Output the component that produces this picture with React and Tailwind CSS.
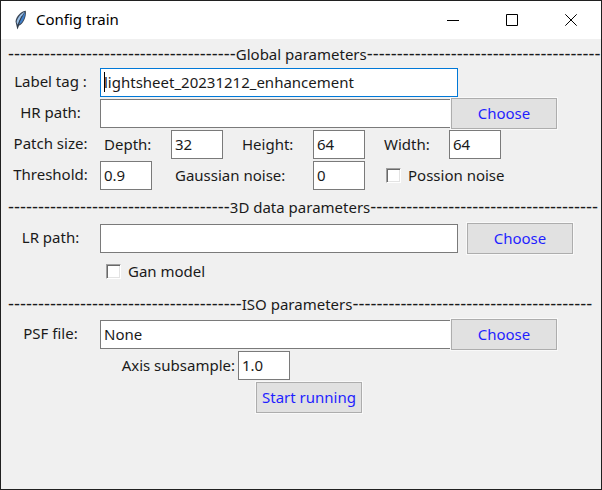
import React from 'react';

function Divider({ title, left, right }) {
  return (
    <h2 className="flex h-8 items-center overflow-hidden whitespace-nowrap pl-[7px]">
      <span className="font-['Liberation_Sans',sans-serif] text-lg leading-none">{'-'.repeat(left)}</span>
      <span className="pb-px">{title}</span>
      <span className="font-['Liberation_Sans',sans-serif] text-lg leading-none">{'-'.repeat(right)}</span>
    </h2>
  );
}

function Row({ children }) {
  return <div className="flex h-[31px] items-center whitespace-nowrap">{children}</div>;
}

function RowLabel({ htmlFor, children }) {
  return (
    <label htmlFor={htmlFor} className="w-[99px] shrink-0 self-start pt-px text-center">
      {children}
    </label>
  );
}

const field = 'h-[29px] border border-[#7a7a7a] bg-white px-[3px] pb-0.5 text-[15px] text-[#1a1a1a] outline-none';

function WideField({ id, value }) {
  return <input id={id} type="text" defaultValue={value} className={`${field} w-full min-w-0 max-w-[358px]`} />;
}

function SmallField({ id, value }) {
  return <input id={id} type="text" defaultValue={value} className={`${field} w-[52px] shrink-0`} />;
}

function ActionButton({ children }) {
  return (
    <button
      type="button"
      className="h-[31px] w-[106px] shrink-0 border border-[#adadad] bg-[#e1e1e1] pb-0.5 text-center text-[#1f1fff] shadow-[0_0_0_1px_#f9f9f9]"
    >
      {children}
    </button>
  );
}

function Tick({ id, children }) {
  return (
    <label htmlFor={id} className="flex items-center gap-[7px]">
      <input
        id={id}
        type="checkbox"
        className="size-[15px] appearance-none border border-t-[#a0a0a0] border-r-white border-b-white border-l-[#a0a0a0] bg-white shadow-[inset_1px_1px_0_#696969,inset_-1px_-1px_0_#e3e3e3]"
      />
      <span className="pb-px">{children}</span>
    </label>
  );
}

function Feather() {
  return (
    <svg viewBox="0 0 14 20" className="h-5 w-3.5" aria-hidden="true">
      <path d="M11.8 .8C7.5 1.2 2.2 6 1.5 11.5L2.4 15.5 3.4 19.4 4.8 15.8C9 14.4 12.8 6.7 11.8.8Z" fill="#3a4656" />
      <path d="M10.8 1.8C7 3.2 3.2 8 2.6 12.2L3.8 14.8C5.2 10.5 7.5 6 10.8 1.8Z" fill="#9cc0e6" />
      <path d="M11 2.2C8.6 6.2 6.2 10.3 4.8 14.6 8.6 12.8 11.4 7 11 2.2Z" fill="#3f7fca" />
      <path d="M8 6C6 9.5 4.4 13 3.5 18.5" stroke="#26303c" strokeWidth=".7" fill="none" />
    </svg>
  );
}

function WindowButton({ label, children }) {
  return (
    <button type="button" aria-label={label} className="flex h-full w-[59px] items-center justify-center">
      <svg viewBox="0 0 12 12" className="size-3" fill="none" stroke="#000" aria-hidden="true">
        {children}
      </svg>
    </button>
  );
}

export default function App() {
  return (
    <div className="flex min-h-screen flex-col border border-[#202020] bg-[#f0f0f0] font-['Noto_Sans','Open_Sans',sans-serif] text-[15px] leading-[26px] text-[#1a1a1a]">
      <header className="flex h-[38px] items-center bg-white pr-px pl-[13px] text-black">
        <Feather />
        <h1 className="ml-2 flex-1 pb-0.5">Config train</h1>
        <div className="flex h-full">
          <WindowButton label="Minimize"><path d="M0 6.5H12" /></WindowButton>
          <WindowButton label="Maximize"><path d="M.5.5H11.5V11.5H.5Z" /></WindowButton>
          <WindowButton label="Close"><path d="M.3.3 11.7 11.7M11.7.3.3 11.7" /></WindowButton>
        </div>
      </header>

      <form className="flex-1">
        <div className="-mt-px -mb-[3px]">
          <Divider title="Global parameters" left={38} right={39} />
        </div>
        <Row>
          <RowLabel htmlFor="tag">Label tag :</RowLabel>
          <div className="relative flex w-full max-w-[358px]">
            <input
              id="tag"
              type="text"
              defaultValue="lightsheet_20231212_enhancement"
              className="h-[29px] w-full border border-[#0078d7] bg-white px-[3px] pb-0.5 text-[15px] text-[#1a1a1a] outline-none"
            />
            <span className="absolute top-1 left-1 h-5 w-px bg-black" />
          </div>
        </Row>
        <Row>
          <RowLabel htmlFor="hr">HR path:</RowLabel>
          <div className="flex w-full max-w-[351px]"><WideField id="hr" value="" /></div>
          <ActionButton>Choose</ActionButton>
        </Row>
        <Row>
          <RowLabel htmlFor="depth">Patch size:</RowLabel>
          <label htmlFor="depth" className="w-[71px] pb-0.5 pl-1">Depth:</label>
          <SmallField id="depth" value="32" />
          <label htmlFor="height" className="w-[90px] pb-0.5 pl-[19px]">Height:</label>
          <SmallField id="height" value="64" />
          <label htmlFor="width" className="w-[84px] pb-0.5 pl-[19px]">Width:</label>
          <SmallField id="width" value="64" />
        </Row>
        <Row>
          <RowLabel htmlFor="threshold">Threshold:</RowLabel>
          <SmallField id="threshold" value="0.9" />
          <label htmlFor="gauss" className="w-[161px] pb-0.5 pl-[23px]">Gaussian noise:</label>
          <SmallField id="gauss" value="0" />
          <div className="pl-[21px]"><Tick id="possion">Possion noise</Tick></div>
        </Row>

        <Divider title="3D data parameters" left={37} right={38} />
        <Row>
          <RowLabel htmlFor="lr">LR path:</RowLabel>
          <WideField id="lr" value="" />
          <div className="ml-[9px]"><ActionButton>Choose</ActionButton></div>
        </Row>
        <div className="flex h-[35px] items-center pl-[105px]">
          <Tick id="gan">Gan model</Tick>
        </div>

        <div className="-mt-px -mb-px">
          <Divider title="ISO parameters" left={39} right={40} />
        </div>
        <Row>
          <RowLabel htmlFor="psf">PSF file:</RowLabel>
          <div className="flex w-full max-w-[351px]"><WideField id="psf" value="None" /></div>
          <ActionButton>Choose</ActionButton>
        </Row>
        <Row>
          <label htmlFor="axis" className="w-[237px] pr-[3px] pb-0.5 text-right">Axis subsample:</label>
          <SmallField id="axis" value="1.0" />
        </Row>
        <div className="pt-px pl-[255px]">
          <ActionButton>Start running</ActionButton>
        </div>
      </form>
    </div>
  );
}
